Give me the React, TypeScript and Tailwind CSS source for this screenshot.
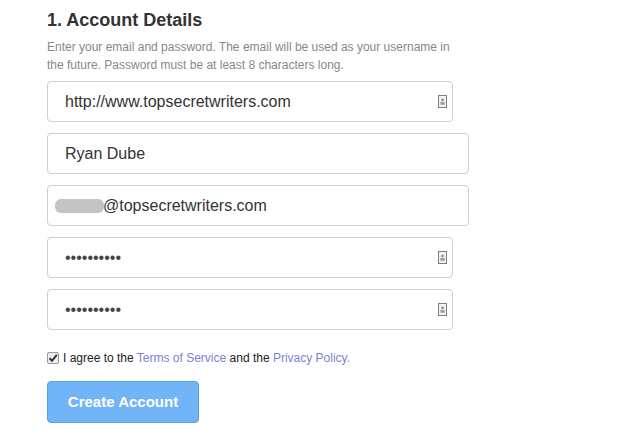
import React from 'react';

function CardIcon() {
  return (
    <svg width="9" height="13" viewBox="0 0 9 13" className="shrink-0">
      <rect x="0.5" y="0.5" width="8" height="12" fill="#f2f2f2" stroke="#7d7d7d" />
      <circle cx="4.5" cy="5" r="1.4" fill="#959595" />
      <rect x="2.3" y="7" width="4.4" height="2.8" fill="#a0a0a0" />
    </svg>
  );
}

interface FieldProps {
  value?: string;
  password?: boolean;
  wide?: boolean;
  icon?: boolean;
  children?: React.ReactNode;
}

function Field({ value, password, wide, icon, children }: FieldProps) {
  return (
    <div
      className={
        'flex items-center h-[41px] bg-white border border-[#cfcfcf] rounded-[4px] pr-[5px] ' +
        (wide ? 'w-[422px] ' : 'w-[406px] ') +
        (children ? 'pl-[7px]' : 'pl-[17px]')
      }
    >
      <div className="flex-1 flex items-center text-[16px] text-[#333] leading-none">
        {children ? children : password ? (
          <span className="text-[16px] text-[#444]">••••••••••</span>
        ) : (
          <span>{value}</span>
        )}
      </div>
      {icon && <CardIcon />}
    </div>
  );
}

export default function App() {
  return (
    <div className="w-[640px] h-[435px] bg-white font-['Liberation_Sans',Arial,sans-serif] pl-[47px] pt-[8px]">
      <h2 className="text-[18px] font-bold text-[#333] leading-[24px]">1. Account Details</h2>
      <p className="mt-[6px] text-[12px] leading-[18px] text-[#888] w-[420px]">
        Enter your email and password. The email will be used as your username in the future. Password must be at least 8 characters long.
      </p>

      <div className="mt-[7px] flex flex-col gap-[11px]">
        <Field value="http://www.topsecretwriters.com" icon />
        <Field value="Ryan Dube" wide />
        <Field wide>
          <span className="inline-block w-[49px] h-[14px] rounded-[6px] bg-[#c4c4c4]" />
          <span className="-ml-[1px]">@topsecretwriters.com</span>
        </Field>
        <Field password icon />
        <Field password icon />
      </div>

      <div className="mt-[19px] flex items-center text-[12px] text-[#222]">
        <span className="w-[12px] h-[12px] border border-[#999] rounded-[2px] bg-[#ececec] flex items-center justify-center mr-[4px]">
          <svg width="10" height="10" viewBox="0 0 10 10">
            <path d="M1.5 5.2 L4 7.8 L8.8 1.8" fill="none" stroke="#333" strokeWidth="2" />
          </svg>
        </span>
        <span>
          I agree to the <span className="text-[#7b83d6]">Terms of Service</span> and the{' '}
          <span className="text-[#7b83d6]">Privacy Policy.</span>
        </span>
      </div>

      <button className="mt-[14px] w-[152px] h-[42px] rounded-[4px] bg-[#72b4f8] border border-[#5a9ee8] text-white text-[15px] font-bold">
        Create Account
      </button>
    </div>
  );
}
